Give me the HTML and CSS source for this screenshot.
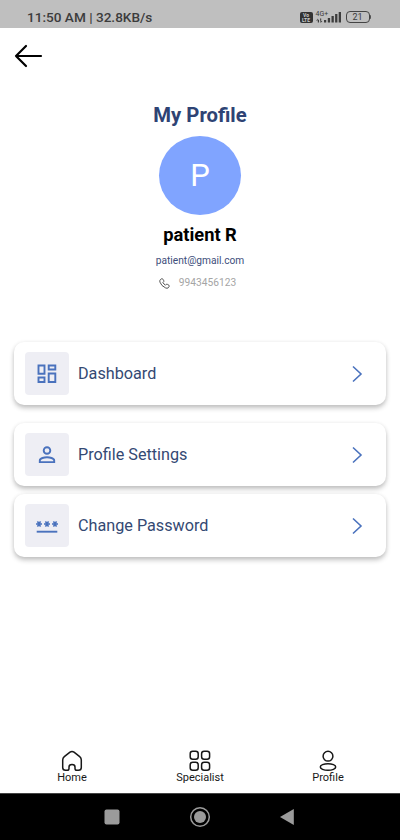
FILE: index.html
```html
<!DOCTYPE html>
<html lang="en">
<head>
<meta charset="utf-8">
<title>My Profile</title>
<link rel="stylesheet" href="styles.css">
</head>
<body>
<div class="screen">
  <header class="status">
    <span class="clock">11:50 AM | 32.8KB/s</span>
    <div class="indicators">
      <div class="volte"><span>Vo</span><span>LTE</span></div>
      <div class="network">
        <span class="net-type">4G+</span>
        <svg class="signal" width="26" height="13" viewBox="0 0 26 13" fill="#3c3c3c"><path d="M0 11l1.800-2.500v4h1.200v-3zM4 8.500h1.200v2.500h1.200l-1.800 2z"/><rect x="8" y="10" width="2.200" height="2.500"/><rect x="11.800" y="8" width="2.300" height="4.500"/><rect x="15.500" y="6" width="2.300" height="6.500"/><rect x="19.100" y="4" width="2.300" height="8.500"/><rect x="22.700" y="2" width="2.300" height="10.500"/></svg>
      </div>
      <div class="battery"><span>21</span></div><i class="battery-tip"></i>
    </div>
  </header>
  <nav class="top">
    <svg width="30" height="24" viewBox="0 0 30 24" fill="none" stroke="#000" stroke-width="2.200" stroke-linecap="round" stroke-linejoin="round"><path d="M28 12H3M13 2L3 12l10 10"/></svg>
  </nav>
  <section class="profile">
    <h1>My Profile</h1>
    <div class="avatar">P</div>
    <h2>patient R</h2>
    <div class="email">patient@gmail.com</div>
    <div class="phone">
      <svg width="11" height="11" viewBox="0 0 24 24" fill="none" stroke="#333" stroke-width="1.800" stroke-linejoin="round"><path d="M3 3.500L6 1.500Q7.500 1 8.300 2.400L10.500 6Q11 7.500 9.800 8.500L8.500 10Q10.500 13.500 14.200 15.600L15.800 14Q17 13 18.300 13.800L21.800 16Q23 17 22.200 18.400L20 21.500Q18 23.200 14.500 21.700Q5 17.500 2 9Q1 5.500 3 3.500Z"/></svg>
      <span>9943456123</span>
    </div>
  </section>
  <main class="menu">
    <div class="card">
      <div class="tile"><svg width="20" height="20" viewBox="0 0 20 20" fill="none" stroke="#4a72bd" stroke-width="1.900"><path d="M1.500 1.500h6v8.200h-6zM11.700 1.500h6.600v4h-6.600zM1.500 13.500h6v4.500h-6zM11.700 9.500h6.600V18h-6.600z"/></svg></div>
      <span class="label">Dashboard</span>
      <svg class="chevron" width="12" height="18" viewBox="0 0 12 18"><path d="M2 1.500L10 9l-8 7.500"/></svg>
    </div>
    <div class="card">
      <div class="tile"><svg width="20" height="20" viewBox="0 0 20 20" fill="none" stroke="#4a72bd" stroke-width="1.900"><circle cx="10" cy="5.500" r="3.300"/><path d="M2.800 17.100v-1.600c0-2.300 4.600-3.300 7.200-3.300s7.200 1 7.200 3.300v1.600z"/></svg></div>
      <span class="label">Profile Settings</span>
      <svg class="chevron" width="12" height="18" viewBox="0 0 12 18"><path d="M2 1.500L10 9l-8 7.500"/></svg>
    </div>
    <div class="card">
      <div class="tile"><svg width="24" height="20" viewBox="0 0 24 20" fill="none" stroke="#4a72bd" stroke-width="1.500"><path d="M1 8h6M2.500 5.400l3 5.200M5.500 5.400l-3 5.200M9 8h6M10.500 5.400l3 5.200M13.500 5.400l-3 5.200M17 8h6M18.500 5.400l3 5.200M21.500 5.400l-3 5.200"/><path d="M1.700 15.700h20.600" stroke-width="1.900"/></svg></div>
      <span class="label">Change Password</span>
      <svg class="chevron" width="12" height="18" viewBox="0 0 12 18"><path d="M2 1.500L10 9l-8 7.500"/></svg>
    </div>
  </main>
  <footer class="tabs">
    <div class="tab">
      <svg width="22" height="22" viewBox="0 0 22 22"><path d="M1.700 10Q1.700 8 3.300 6.700L9 2.200Q11 .700 13 2.200L18.700 6.700Q20.300 8 20.300 10V17.500Q20.300 20.300 17.500 20.300H15.800Q14 20.300 14 18.500V17Q14 14.600 11 14.600T8 17V18.500Q8 20.300 6.200 20.300H4.500Q1.700 20.300 1.700 17.500Z"/></svg>
      <span>Home</span>
    </div>
    <div class="tab">
      <svg width="22" height="22" viewBox="0 0 22 22"><rect x="1.200" y="1.200" width="8" height="8" rx="2.500"/><rect x="12.600" y="1.200" width="8" height="8" rx="2.500"/><rect x="1.200" y="12.300" width="8" height="8" rx="2.500"/><rect x="12.600" y="12.300" width="8" height="8" rx="2.500"/></svg>
      <span>Specialist</span>
    </div>
    <div class="tab">
      <svg width="22" height="22" viewBox="0 0 22 22"><circle cx="11" cy="6.200" r="4.900"/><ellipse cx="11" cy="17" rx="7.700" ry="3.300"/></svg>
      <span>Profile</span>
    </div>
  </footer>
  <div class="system">
    <svg width="16" height="16" viewBox="0 0 16 16"><rect x=".500" y=".500" width="15" height="15" rx="2" fill="#9b9b9b"/></svg>
    <svg width="22" height="22" viewBox="0 0 22 22"><circle cx="11" cy="11" r="9.300" fill="none" stroke="#9b9b9b" stroke-width="1.500"/><circle cx="11" cy="11" r="6" fill="#9b9b9b"/></svg>
    <svg width="16" height="18" viewBox="0 0 16 18"><path d="M0 9L13.800 1v16z" fill="#9b9b9b"/></svg>
  </div>
</div>
</body>
</html>
```
FILE: styles.css
```css
* { box-sizing: border-box; }
body { margin: 0; background: #fff; font-family: Roboto, "Liberation Sans", sans-serif; }
svg { display: block; flex: none; }
.screen { width: 400px; height: 840px; display: flex; flex-direction: column; overflow: hidden; }

.status { height: 28px; flex: none; background: #bfbfbf; display: flex; justify-content: space-between; padding: 9px 29px 0 27px; color: #3c3c3c; }
.clock { font-size: 13.6px; font-weight: 500; line-height: 18px; white-space: nowrap; }
.indicators { display: flex; align-items: flex-start; }
.volte { width: 13px; height: 11px; margin: 3px 3px 0 0; border-radius: 2px; background: #333; color: #ccc; font-size: 5px; font-weight: 700; line-height: 4.5px; padding-top: 1px; display: flex; flex-direction: column; align-items: center; }
.network { width: 26px; height: 14px; display: grid; margin-right: 4px; }
.network > * { grid-area: 1 / 1; }
.net-type { font-size: 7px; line-height: 8px; margin-top: 1px; }
.signal { margin-top: 1px; }
.battery { width: 24px; height: 12px; margin-top: 2px; border: 1px solid #444; border-radius: 4px; font-size: 9px; line-height: 10px; text-align: center; }
.battery-tip { width: 1.5px; height: 4px; margin-top: 6px; background: #555; border-radius: 0 1px 1px 0; }
.clock { margin-top: -0.6px; }

.top { height: 74px; flex: none; padding: 16px 0 0 13px; }

.profile { height: 240px; flex: none; display: flex; flex-direction: column; align-items: center; }
.profile h1 { margin: 0; font-size: 20.3px; line-height: 26px; font-weight: 700; color: #2e4374; }
.avatar { width: 82px; height: 79px; margin-top: 8px; border-radius: 50%; background: #80a4ff; color: #fff; font-size: 31px; line-height: 79px; text-align: center; }
.profile h2 { margin: 8px 0 0; font-size: 18.3px; line-height: 24px; font-weight: 700; color: #000; }
.email { margin-top: 7px; font-size: 10.2px; line-height: 14px; color: #3d4e7b; }
.phone { margin-top: 8px; margin-right: 5px; display: flex; align-items: center; gap: 9px; font-size: 10.2px; line-height: 14px; color: #a5a5a5; }

.menu { flex: 1; padding: 0 14px; }
.card { height: 63px; display: flex; align-items: center; padding: 0 23px 0 11px; background: #fff; border-radius: 10px; box-shadow: 0 3px 5px rgba(0, 0, 0, .24), 0 0 4px rgba(0, 0, 0, .05); }
.card:nth-child(2) { margin-top: 18px; }
.card:nth-child(3) { margin-top: 8px; }
.tile { width: 44px; height: 43px; border-radius: 4px; background: #eeeef4; display: flex; align-items: center; justify-content: center; }
.label { flex: 1; margin-left: 9px; font-size: 16.2px; line-height: 20px; color: #344973; }
.chevron { margin-top: 1px; fill: none; stroke: #4a72bd; stroke-width: 1.6; }

.tabs { height: 44px; flex: none; display: flex; padding: 0 8px; }
.tab { flex: 1; display: flex; flex-direction: column; align-items: center; font-size: 11px; line-height: 13px; color: #181818; }
.tab svg { margin: 1px 0 -1px; fill: none; stroke: #181818; stroke-width: 1.5; }
.system { height: 47px; flex: none; background: #000; border-top: 1px solid #444; display: flex; align-items: center; justify-content: center; gap: 69px; }
```
